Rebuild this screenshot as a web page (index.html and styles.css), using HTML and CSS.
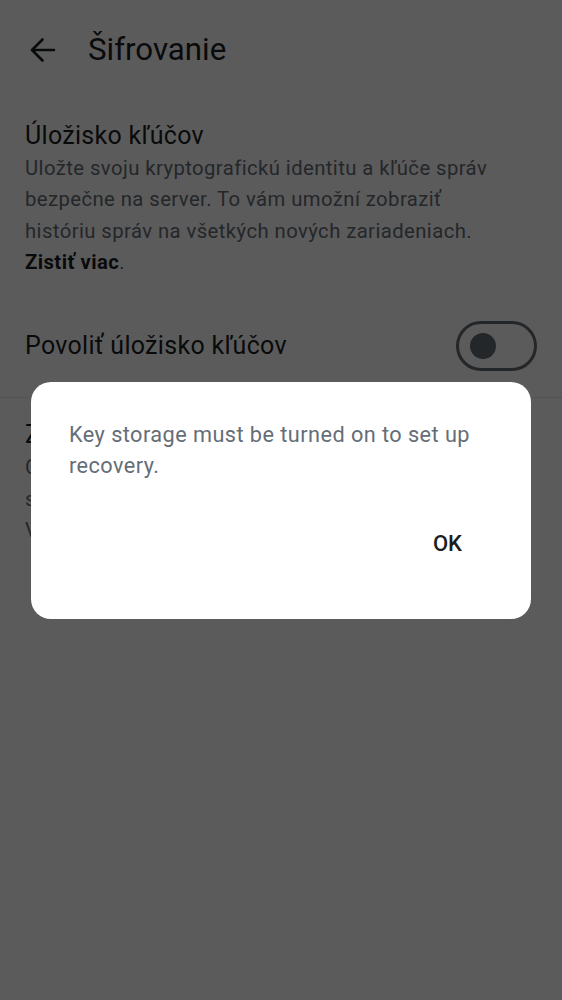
FILE: index.html
```html
<!DOCTYPE html>
<html lang="sk">
<head>
<meta charset="utf-8">
<title>Šifrovanie</title>
<link rel="stylesheet" href="styles.css">
</head>
<body>
<div class="page">
  <header class="topbar">
    <button class="back" aria-label="Späť">
      <svg width="26" height="26" viewBox="0 0 26 26" fill="none" stroke="#1b1d22" stroke-width="2.6" stroke-linecap="round" stroke-linejoin="round">
        <path d="M24 13H2.5M12.5 2.5L2 13l10.5 10.5"/>
      </svg>
    </button>
    <h1 class="title">Šifrovanie</h1>
  </header>

  <section class="section">
    <h2 class="section-title">Úložisko kľúčov</h2>
    <p class="section-text">Uložte svoju kryptografickú identitu a kľúče správ bezpečne na server. To vám umožní zobraziť<br>históriu správ na všetkých nových zariadeniach. <strong>Zistiť viac</strong>.</p>
  </section>

  <div class="row">
    <span class="row-label">Povoliť úložisko kľúčov</span>
    <span class="switch"><span class="thumb"></span></span>
  </div>

  <div class="divider"></div>

  <section class="section section-second">
    <h2 class="section-title">Zálohovanie</h2>
    <p class="section-text">Celú svoju kryptografickú identitu môžete<br>spravovať pomocou kľúča na obnovenie.<br>Využite ho pri strate všetkých zariadení.</p>
  </section>
</div>

<div class="scrim">
  <div class="dialog" role="dialog">
    <p class="dialog-text">Key storage must be turned on to set up recovery.</p>
    <div class="dialog-actions">
      <button class="dialog-btn">OK</button>
    </div>
  </div>
</div>
</body>
</html>
```

FILE: styles.css
```css
* { box-sizing: border-box; }
html, body {
  margin: 0;
  padding: 0;
  background: #ffffff;
  font-family: Roboto, "Noto Sans", "Liberation Sans", sans-serif;
  color: #1b1d22;
}
.page {
  width: 562px;
  min-height: 1000px;
}
.topbar {
  display: flex;
  align-items: center;
  height: 100px;
  padding: 0 0 0 30px;
}
.back {
  display: flex;
  align-items: center;
  justify-content: center;
  width: 26px;
  height: 26px;
  padding: 0;
  margin: 0 32px 0 0;
  border: 0;
  background: none;
}
.title {
  margin: 0;
  font-size: 31.25px;
  font-weight: 400;
  line-height: 40px;
  color: #1b1d22;
}
.section {
  padding: 18.5px 42px 0 25px;
}
.section-title {
  margin: 0;
  font-size: 25px;
  font-weight: 400;
  line-height: 34px;
  letter-spacing: 0.3px;
  color: #1b1d22;
}
.section-text {
  margin: 0;
  font-size: 20.3px;
  line-height: 31.5px;
  letter-spacing: 0.42px;
  color: #656d77;
}
.section-text strong {
  font-weight: 700;
  color: #1b1d22;
}
.row {
  display: flex;
  align-items: center;
  justify-content: space-between;
  height: 74px;
  margin-top: 30.5px;
  padding: 0 25px;
}
.row-label {
  font-size: 25px;
  line-height: 34px;
  letter-spacing: 0.3px;
  color: #1b1d22;
}
.switch {
  display: flex;
  align-items: center;
  width: 81px;
  height: 50px;
  border: 3px solid #656d77;
  border-radius: 25px;
  padding-left: 11px;
}
.thumb {
  width: 26px;
  height: 26px;
  border-radius: 50%;
  background: #656d77;
}
.divider {
  height: 1px;
  margin-top: 14px;
  background: #e1e6ec;
}
.section-second {
  padding-top: 20px;
}
.scrim {
  position: fixed;
  inset: 0;
  display: flex;
  align-items: center;
  justify-content: center;
  background: rgba(0, 0, 0, 0.643);
}
.dialog {
  width: 500px;
  height: 237px;
  background: #ffffff;
  border-radius: 20px;
  padding: 37.5px 38px 0 38px;
  display: flex;
  flex-direction: column;
}
.dialog-text {
  margin: 0;
  font-size: 21.7px;
  line-height: 31px;
  letter-spacing: 0.45px;
  color: #656d77;
}
.dialog-actions {
  display: flex;
  justify-content: flex-end;
  margin-top: 31px;
}
.dialog-btn {
  height: 62px;
  padding: 0 31px 0 19px;
  border: 0;
  background: none;
  font-family: Roboto, "Noto Sans", "Liberation Sans", sans-serif;
  font-size: 22px;
  font-weight: 500;
  color: #1b1d22;
}
```
